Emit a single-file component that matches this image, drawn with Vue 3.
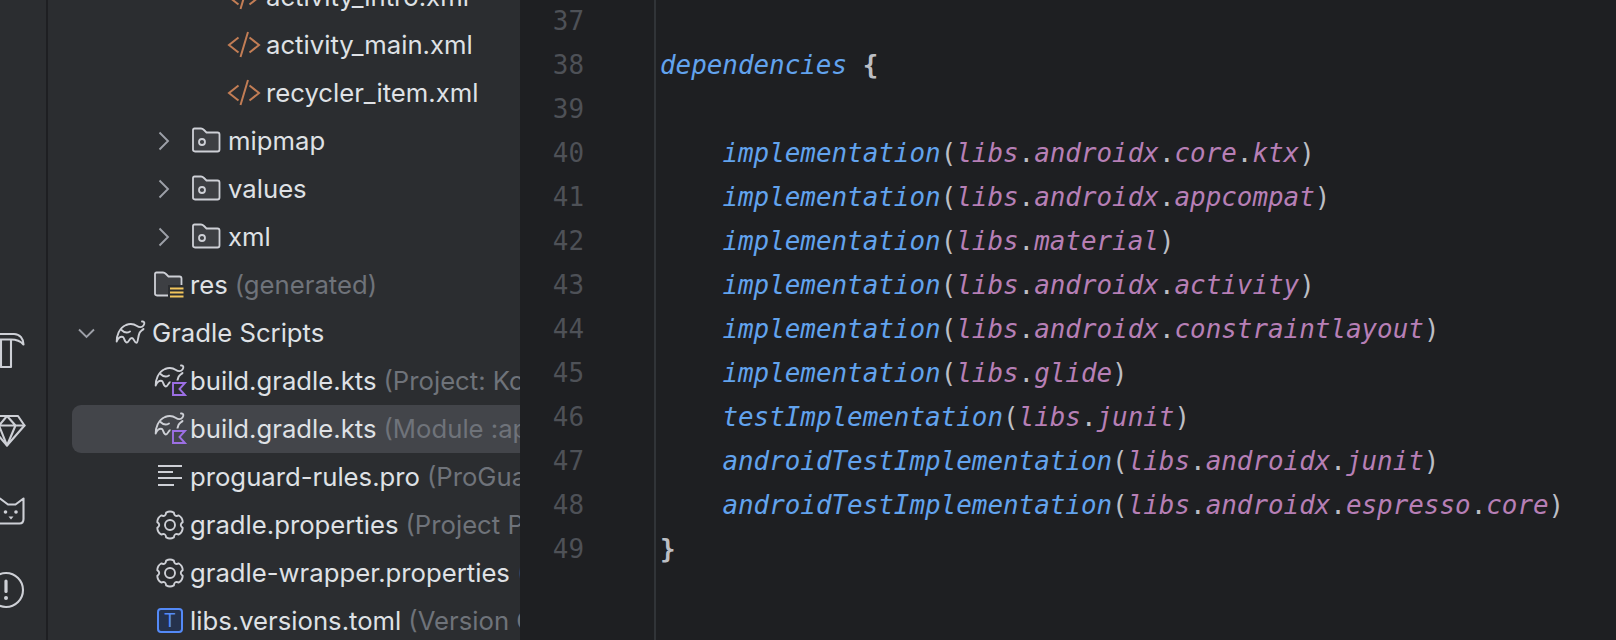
<script setup>
const elephant = 'M2.7 25.5C2.5 20 5 12 12 9C16 7.5 20 8 23 10C25 11.5 28 11.5 29.5 9.5C31 7.5 30.5 5 28 5.5M2.7 25.5C4 22 6.5 20 9 21C10.5 22 10.5 26.5 13 26.5C15 26.5 15 22 18 22C20 22 20 26.8 22.5 26.8C24 26.8 24 20 25.5 17C26.5 15 28 14.5 29.5 13M7.5 14C10 16.5 13.5 17 16 15.5'

const gear = (() => {
  const cx = 18, cy = 17, n = 6
  const pts = []
  for (let i = 0; i < n; i++) {
    const a = (i * Math.PI * 2) / n - Math.PI / 2
    const s = Math.PI / n
    const p = (r, t) => `${(cx + r * Math.cos(t)).toFixed(2)} ${(cy + r * Math.sin(t)).toFixed(2)}`
    pts.push(`${i ? 'L' : 'M'}${p(13, a - 0.3)}Q${p(14.6, a)} ${p(13, a + 0.3)}Q${p(8.8, a + s)} ${p(13, a + 2 * s - 0.3)}`)
  }
  return pts.join('') + 'Z'
})()

const rows = [
  { label: 'activity_intro.xml', icon: 'xml', indent: 228 },
  { label: 'activity_main.xml', icon: 'xml', indent: 228 },
  { label: 'recycler_item.xml', icon: 'xml', indent: 228 },
  { label: 'mipmap', icon: 'folder', indent: 157, chev: 'right' },
  { label: 'values', icon: 'folder', indent: 157, chev: 'right' },
  { label: 'xml', icon: 'folder', indent: 157, chev: 'right' },
  { label: 'res', hint: '(generated)', icon: 'res', indent: 152 },
  { label: 'Gradle Scripts', icon: 'gradle', indent: 81, chev: 'down' },
  { label: 'build.gradle.kts', hint: '(Project: KotlinProject)', icon: 'kts', indent: 152 },
  { label: 'build.gradle.kts', hint: '(Module :app)', icon: 'kts', indent: 152, selected: true },
  { label: 'proguard-rules.pro', hint: '(ProGuard Rules)', icon: 'lines', indent: 152 },
  { label: 'gradle.properties', hint: '(Project Properties)', icon: 'gear', indent: 152 },
  { label: 'gradle-wrapper.properties', hint: '(Gradle Version)', icon: 'gear', indent: 152 },
  { label: 'libs.versions.toml', hint: '(Version Catalog)', icon: 'toml', indent: 152 },
]

const deps = [
  ['implementation', ['androidx', 'core', 'ktx']],
  ['implementation', ['androidx', 'appcompat']],
  ['implementation', ['material']],
  ['implementation', ['androidx', 'activity']],
  ['implementation', ['androidx', 'constraintlayout']],
  ['implementation', ['glide']],
  ['testImplementation', ['junit']],
  ['androidTestImplementation', ['androidx', 'junit']],
  ['androidTestImplementation', ['androidx', 'espresso', 'core']],
]
const numbers = Array.from({ length: 13 }, (_, i) => 37 + i)
</script>

<template>
  <div class="ide">
    <aside class="stripe">
      <svg class="tool" viewBox="0 325 46 50" width="46" height="50">
        <path d="M-6 334H14C20 334 23.5 339 23.5 344.5C20 340.5 16 339.5 11 339.5H-6" />
        <path d="M1 340V367H11V340" />
      </svg>
      <svg class="tool" viewBox="0 405 46 50" width="46" height="50">
        <path d="M-4 416H18L24.5 425.5L7 445.5L-10 425.5L-4 416Z" />
        <path d="M-10 425.5H24.5M7 416L-1 425.5L7 445.5L15.5 425.5L7 416" />
      </svg>
      <svg class="tool" viewBox="0 485 46 50" width="46" height="50">
        <path d="M0 498.5L8 504.5H15.5L23.5 498.5V519C23.5 522 22 523.5 19.5 523.5H0" />
        <circle class="solid" cx="5.5" cy="512" r="1.8" />
        <circle class="solid" cx="16" cy="512" r="1.8" />
        <path class="solid" d="M8.5 516.5H13.5L11 519.5Z" />
      </svg>
      <svg class="tool" viewBox="0 565 46 50" width="46" height="50">
        <circle cx="6" cy="590" r="17" />
        <path class="bang" d="M6 581V591.5" />
        <circle class="solid" cx="6" cy="598" r="2" />
      </svg>
    </aside>

    <nav class="tree">
      <div v-for="(row, i) in rows" :key="i" class="row" :class="{ selected: row.selected }" :style="{ paddingLeft: row.indent - 72 + 'px' }">
        <svg v-if="row.chev" class="chev" width="33" height="34" viewBox="0 0 33 34">
          <path v-if="row.chev === 'right'" d="M2.5 8.5L11 17L2.5 25.5" />
          <path v-else d="M-2 13.5L5.5 21L13 13.5" />
        </svg>
        <svg class="icon" width="38" height="34" viewBox="0 0 38 34">
          <g v-if="row.icon === 'xml'" class="xml">
            <path d="M10.5 9.5L1 17L10.5 24.5M12.5 29L20 4M21.5 9.5L31 17L21.5 24.5" />
          </g>
          <g v-else-if="row.icon === 'folder'" class="line">
            <path class="tint" d="M4.5 4.5H11C12.5 4.5 13 5 14 6L16.5 8.5H27.5C29 8.5 29.5 9.5 29.5 10.5V25.5C29.5 26.8 28.8 27.5 27.5 27.5H5C3.5 27.5 3 26.8 3 25.5V6C3 5 3.5 4.5 4.5 4.5Z" />
            <circle cx="12" cy="18" r="3" />
          </g>
          <g v-else-if="row.icon === 'res'" class="line">
            <path class="tint" d="M4.5 4.5H11C12.5 4.5 13 5 14 6L16.5 8.5H27.5C29 8.5 29.5 9.5 29.5 10.5V25.5C29.5 26.8 28.8 27.5 27.5 27.5H5C3.5 27.5 3 26.8 3 25.5V6C3 5 3.5 4.5 4.5 4.5Z" />
            <rect class="backing" x="16" y="17" width="17" height="15" />
            <path class="yellow" d="M18 20.5H31.5M18 24.5H31.5M18 28.5H31.5" />
          </g>
          <g v-else-if="row.icon === 'gradle'" class="line thin">
            <path :d="elephant" />
          </g>
          <g v-else-if="row.icon === 'kts'" class="line thin">
            <g transform="translate(1 -4)"><path :d="elephant" /></g>
            <rect class="backing" x="18.5" y="16.5" width="16" height="17" />
            <path class="kotlin" d="M21 19H33L27.5 25L33 31H21Z" />
          </g>
          <g v-else-if="row.icon === 'lines'" class="line">
            <path d="M6 6H30M6 12H21M6 18H30M6 25H22" />
          </g>
          <g v-else-if="row.icon === 'gear'" class="line thin">
            <path :d="gear" />
            <circle cx="18" cy="17" r="5" />
          </g>
          <g v-else-if="row.icon === 'toml'">
            <rect class="toml" x="6" y="5" width="24" height="23" rx="3" />
            <text class="toml-t" x="18" y="23" text-anchor="middle">T</text>
          </g>
        </svg>
        <span class="label">{{ row.label }}</span>
        <span v-if="row.hint" class="hint">{{ row.hint }}</span>
      </div>
    </nav>

    <main class="editor">
      <div class="gutter">
        <div v-for="n in numbers" :key="n" class="num">{{ n }}</div>
      </div>
      <div class="code">
        <div class="line-c"></div>
        <div class="line-c"><span class="fn">dependencies</span> <b class="brace">{</b></div>
        <div class="line-c"></div>
        <div v-for="(dep, i) in deps" :key="i" class="line-c"><span class="tab"></span><span class="fn">{{ dep[0] }}</span><span class="punct">(</span><span class="prop">libs</span><template v-for="part in dep[1]" :key="part"><span class="punct">.</span><span class="prop">{{ part }}</span></template><span class="punct">)</span></div>
        <div class="line-c"><b class="brace">}</b></div>
      </div>
    </main>
  </div>
</template>

<style>
html, body { margin: 0; background: #1e1f22; }
</style>

<style scoped>
.ide {
  display: flex;
  width: 1616px;
  height: 640px;
  overflow: hidden;
  background: #1e1f22;
  font-family: Inter, "Noto Sans", sans-serif;
}
.stripe {
  box-sizing: border-box;
  flex: none;
  width: 48px;
  height: 640px;
  padding-top: 325px;
  display: flex;
  flex-direction: column;
  gap: 30px;
  background: #2b2d30;
  border-right: 2px solid #1e1f22;
}
.tool { display: block; flex: none; }
.tool path, .tool circle {
  fill: none;
  stroke: #ced0d6;
  stroke-width: 2.1;
  stroke-linejoin: round;
  stroke-linecap: round;
}
.tool .solid { fill: #ced0d6; stroke: none; }
.tool .bang { stroke-width: 3.2; }

.tree {
  box-sizing: border-box;
  flex: none;
  width: 472px;
  height: 640px;
  overflow: hidden;
  padding-left: 24px;
  background: #2b2d30;
}
.row {
  display: flex;
  align-items: center;
  box-sizing: border-box;
  height: 48px;
  width: 470px;
  white-space: nowrap;
  font-size: 25.7px;
  color: #dfe1e5;
  border-radius: 9px;
}
.row:first-child { margin-top: -27px; }
.row.selected { background: #43454a; }
.label, .hint { margin-bottom: 2px; }
.chev, .icon { flex: none; overflow: visible; }
.chev path {
  fill: none;
  stroke: #9da0a8;
  stroke-width: 1.9;
}
.xml path {
  fill: none;
  stroke: #c27d55;
  stroke-width: 2;
}
.line path, .line circle {
  fill: none;
  stroke: #ced0d6;
  stroke-width: 1.8;
}
.line.thin path, .line.thin circle { stroke-width: 1.9; stroke-linecap: round; }
.line .tint { fill: #3d3f43; }
.line .backing, .backing { fill: #2b2d30; stroke: none; }
.selected .backing { fill: #43454a; }
.line .yellow { stroke: #f2c55c; stroke-width: 2.2; }
.line .kotlin {
  fill: #2b2d30;
  stroke: #9c6fe4;
  stroke-width: 2.2;
}
.selected .line .kotlin { fill: #43454a; }
.toml { fill: #25324d; stroke: #548af7; stroke-width: 2; }
.toml-t {
  fill: #548af7;
  font-family: Inter, sans-serif;
  font-size: 19px;
}
.hint { margin-left: 7px; color: #6f737a; }

.editor {
  flex: 1;
  display: flex;
  height: 640px;
  overflow: hidden;
  font-family: "DejaVu Sans Mono", "Liberation Mono", monospace;
  font-size: 25.9px;
}
.gutter {
  box-sizing: border-box;
  flex: none;
  width: 136px;
  height: 640px;
  padding-right: 70px;
  border-right: 2px solid #313438;
  color: #4e5157;
  text-align: right;
}
.num, .line-c {
  height: 44px;
  white-space: pre;
}
.num { line-height: 43px; }
.line-c { line-height: 42px; }
.code { padding-left: 4px; font-style: italic; }
.tab { display: inline-block; width: 62.4px; }
.fn { color: #62a3ee; }
.prop { color: #b77fb6; }
.punct { color: #bcbec4; font-style: normal; }
.brace { color: #bcbec4; font-style: normal; }
</style>
